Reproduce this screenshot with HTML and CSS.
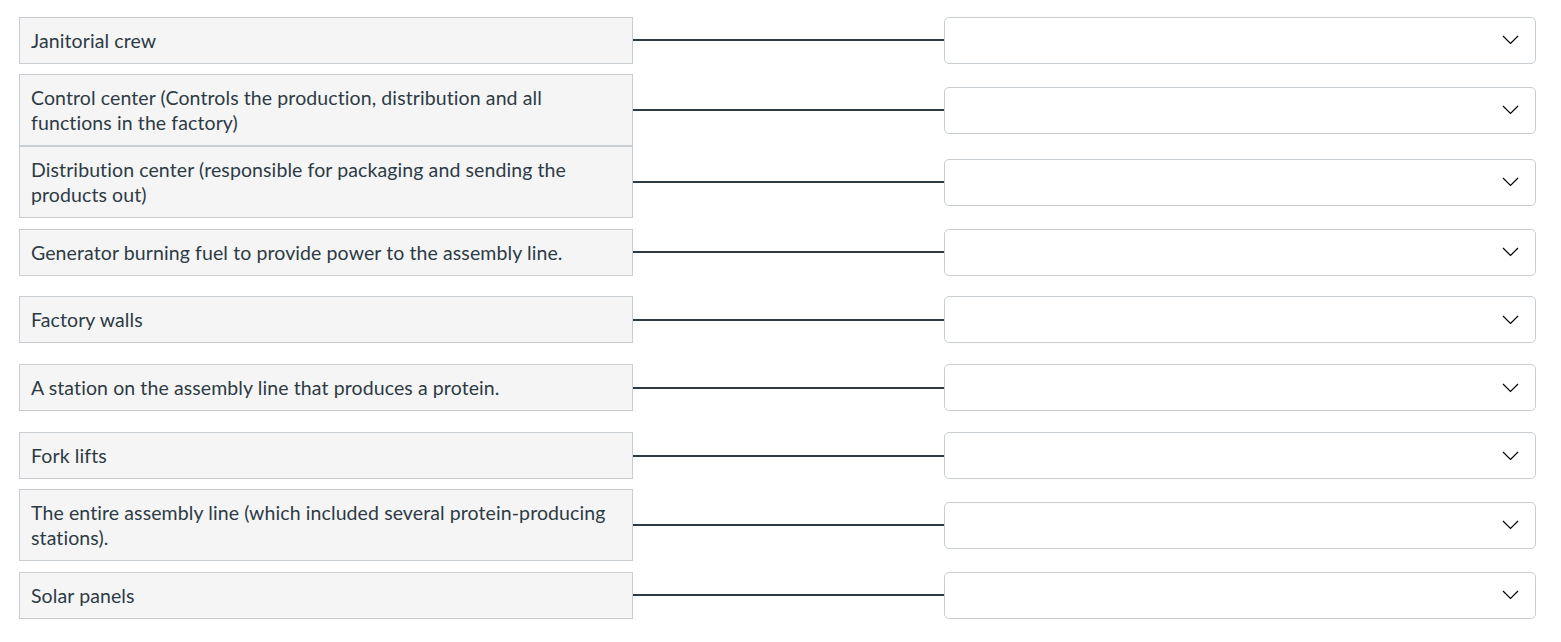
FILE: index.html
```html
<!DOCTYPE html>
<html>
<head>
<meta charset="utf-8">
<link rel="stylesheet" href="styles.css">
</head>
<body>
<div class="matching">
  <div class="row"><div class="left">Janitorial crew</div><div class="line"></div><div class="select"><svg class="chev" width="17" height="10" viewBox="0 0 17 10"><path d="M1 1 L8.5 8.5 L16 1" fill="none" stroke="#000" stroke-width="1.2"/></svg></div></div>
  <div class="row"><div class="left">Control center (Controls the production, distribution and all functions in the factory)</div><div class="line"></div><div class="select"><svg class="chev" width="17" height="10" viewBox="0 0 17 10"><path d="M1 1 L8.5 8.5 L16 1" fill="none" stroke="#000" stroke-width="1.2"/></svg></div></div>
  <div class="row"><div class="left">Distribution center (responsible for packaging and sending the products out)</div><div class="line"></div><div class="select"><svg class="chev" width="17" height="10" viewBox="0 0 17 10"><path d="M1 1 L8.5 8.5 L16 1" fill="none" stroke="#000" stroke-width="1.2"/></svg></div></div>
  <div class="row"><div class="left">Generator burning fuel to provide power to the assembly line.</div><div class="line"></div><div class="select"><svg class="chev" width="17" height="10" viewBox="0 0 17 10"><path d="M1 1 L8.5 8.5 L16 1" fill="none" stroke="#000" stroke-width="1.2"/></svg></div></div>
  <div class="row"><div class="left">Factory walls</div><div class="line"></div><div class="select"><svg class="chev" width="17" height="10" viewBox="0 0 17 10"><path d="M1 1 L8.5 8.5 L16 1" fill="none" stroke="#000" stroke-width="1.2"/></svg></div></div>
  <div class="row"><div class="left">A station on the assembly line that produces a protein.</div><div class="line"></div><div class="select"><svg class="chev" width="17" height="10" viewBox="0 0 17 10"><path d="M1 1 L8.5 8.5 L16 1" fill="none" stroke="#000" stroke-width="1.2"/></svg></div></div>
  <div class="row"><div class="left">Fork lifts</div><div class="line"></div><div class="select"><svg class="chev" width="17" height="10" viewBox="0 0 17 10"><path d="M1 1 L8.5 8.5 L16 1" fill="none" stroke="#000" stroke-width="1.2"/></svg></div></div>
  <div class="row"><div class="left">The entire assembly line (which included several protein-producing stations).</div><div class="line"></div><div class="select"><svg class="chev" width="17" height="10" viewBox="0 0 17 10"><path d="M1 1 L8.5 8.5 L16 1" fill="none" stroke="#000" stroke-width="1.2"/></svg></div></div>
  <div class="row"><div class="left">Solar panels</div><div class="line"></div><div class="select"><svg class="chev" width="17" height="10" viewBox="0 0 17 10"><path d="M1 1 L8.5 8.5 L16 1" fill="none" stroke="#000" stroke-width="1.2"/></svg></div></div>
</div>
</body>
</html>
```

FILE: styles.css
```css
html, body {
  margin: 0;
  padding: 0;
  background: #fff;
}
body {
  font-family: Lato, "Open Sans", sans-serif;
  color: #2d3b45;
}
.matching {
  padding: 6.5px 0 0 19px;
  display: flex;
  flex-direction: column;
}
.row {
  display: flex;
  align-items: center;
  min-height: 67.8px;
}
.left {
  box-sizing: border-box;
  width: 614px;
  flex: none;
  background: #f5f5f5;
  border: 1px solid #c7cdd1;
  padding: 10px 10px 10px 11px;
  font-size: 19.5px;
  letter-spacing: 0.1px;
  line-height: 25px;
}
.line {
  width: 311px;
  flex: none;
  height: 2px;
  background: #2d3b45;
}
.select {
  box-sizing: border-box;
  width: 592px;
  height: 47px;
  flex: none;
  border: 1px solid #c7cdd1;
  border-radius: 5px;
  background: #fff;
  display: flex;
  align-items: center;
  justify-content: flex-end;
  padding-right: 16px;
}
.chev {
  display: block;
}
```
